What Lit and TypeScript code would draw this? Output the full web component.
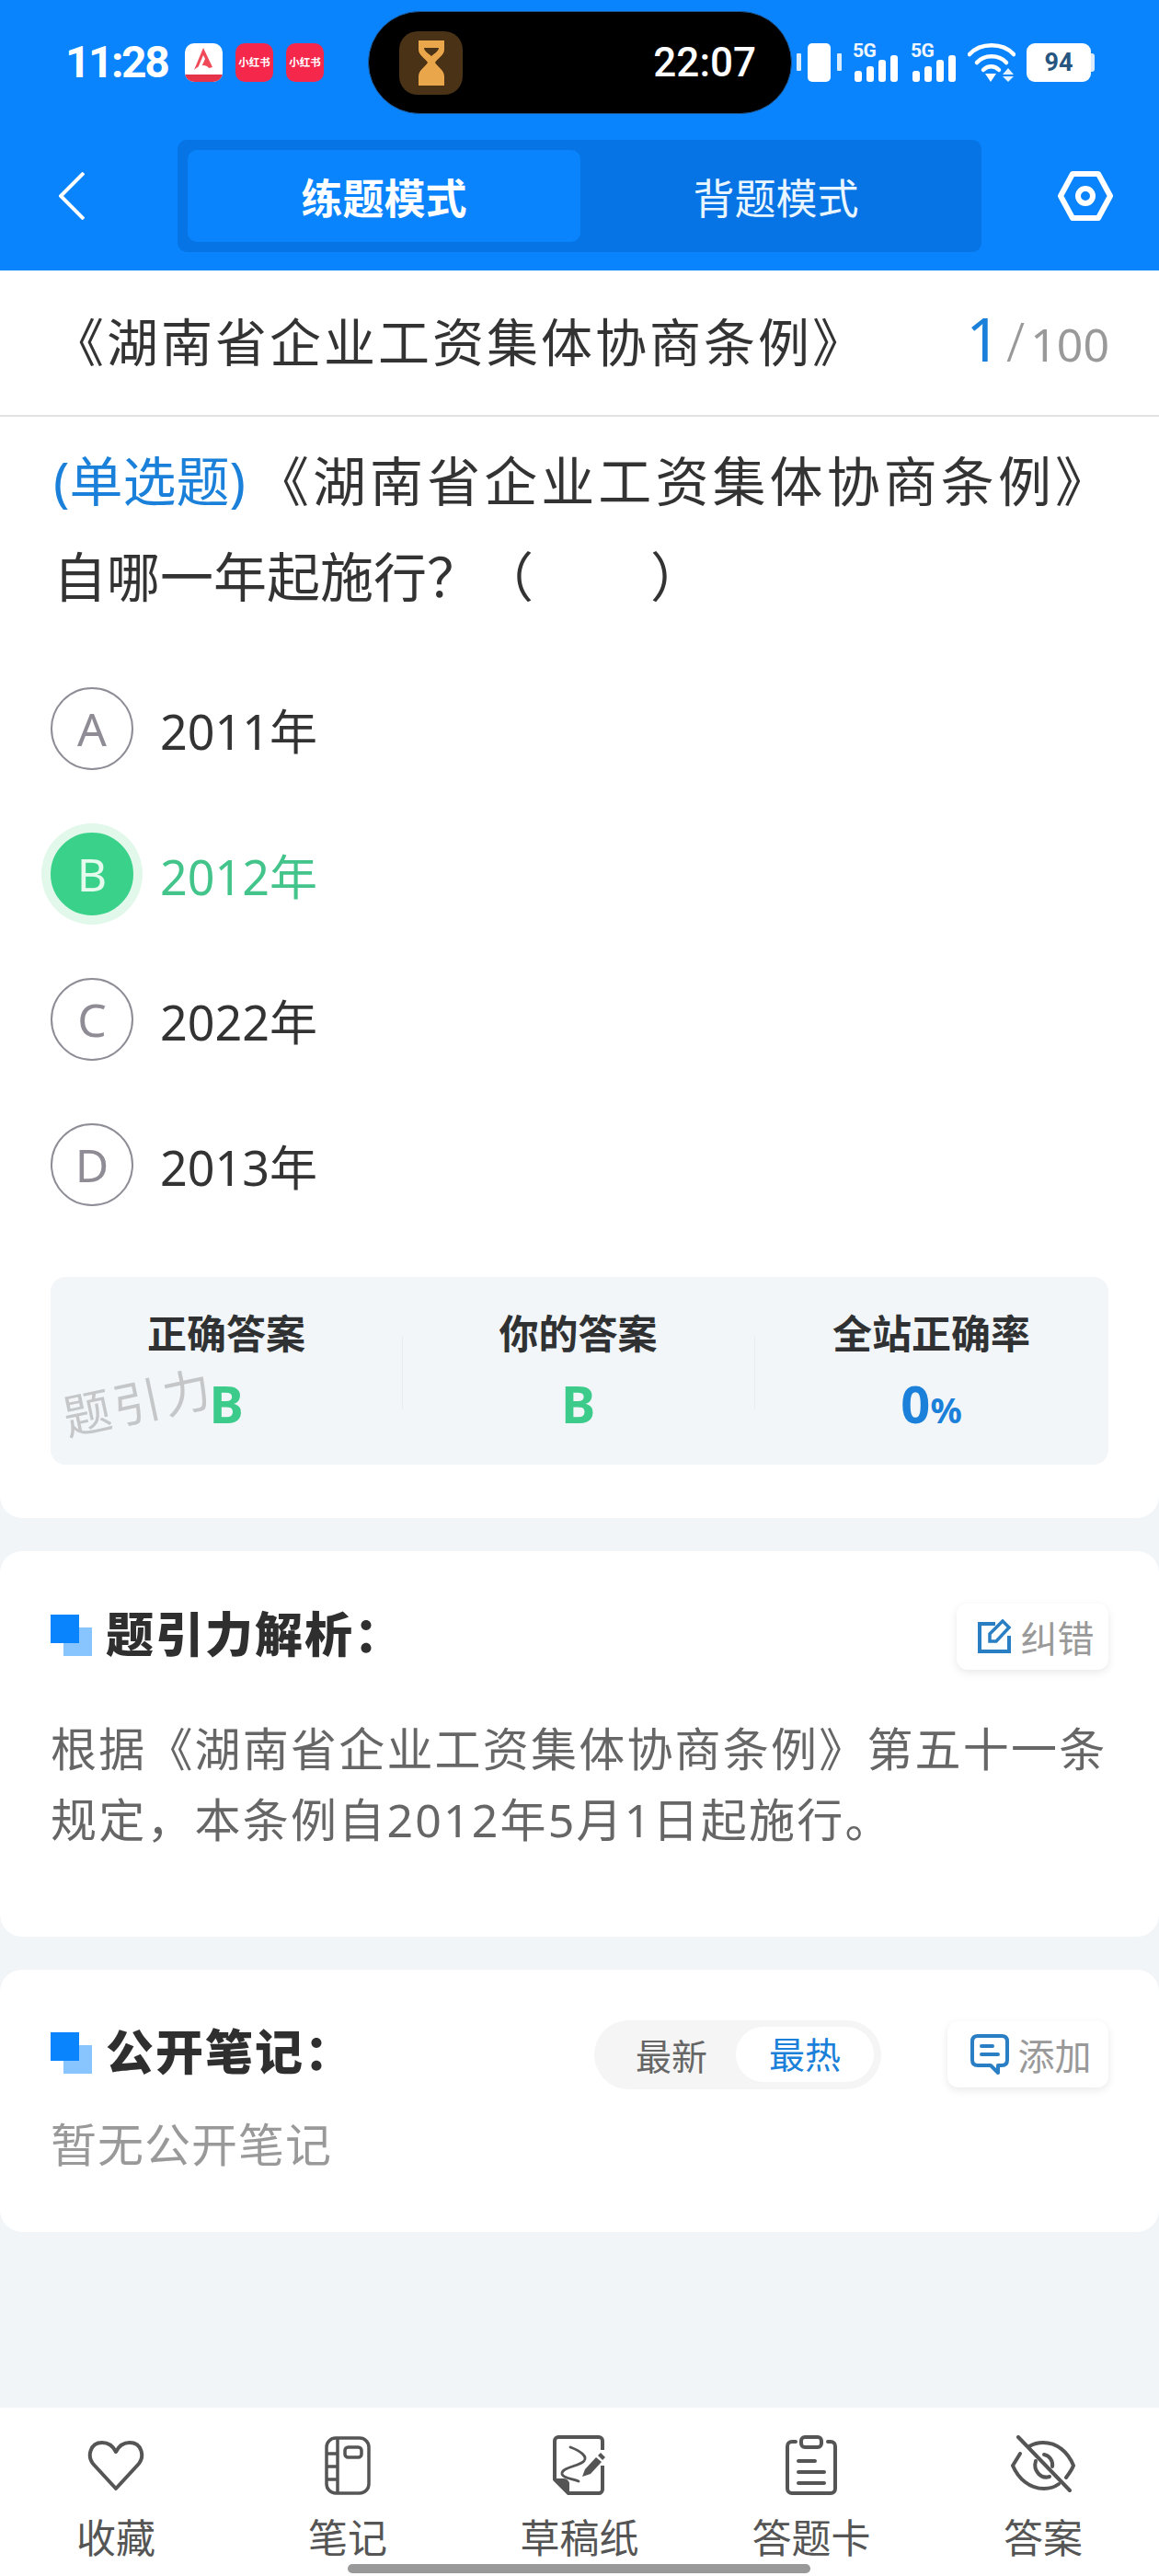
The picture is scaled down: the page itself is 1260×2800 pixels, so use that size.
import { LitElement, html, css, svg } from "lit";
import { customElement } from "lit/decorators.js";

const opts = [
  ["A", "2011年", false],
  ["B", "2012年", true],
  ["C", "2022年", false],
  ["D", "2013年", false],
] as const;

const bars = svg`<rect x="2" y="17" width="8" height="12" rx="3"/><rect x="15" y="12" width="8" height="17" rx="3"/><rect x="28" y="5" width="8" height="24" rx="3"/><rect x="41" y="0" width="8" height="29" rx="3"/>`;

@customElement("app-root")
export class AppRoot extends LitElement {
  static styles = css`
    :host { display: block; width: 1260px; height: 2800px; background: #f1f5f8; font-family: "Noto Sans", "Noto Sans CJK SC", sans-serif; color: #333; overflow: hidden; }
    .page { height: 2800px; display: flex; flex-direction: column; }
    svg { display: block; flex: none; }
    .head { height: 294px; background: #0a84fd; color: #fff; display: flex; flex-direction: column; flex: none; }
    .status { height: 136px; padding: 12px 0 0 71px; box-sizing: border-box; display: flex; align-items: flex-start; }
    .time { font: 700 48px/50px "Roboto", sans-serif; letter-spacing: -2.5px; width: 130px; margin-top: 31px; }
    .apps { display: flex; gap: 14px; margin-top: 35px; width: 199px; }
    .app { width: 41px; height: 42px; border-radius: 10px; background: #f5274b; display: flex; align-items: center; justify-content: center; overflow: hidden; color: #fff; font: 700 11.5px/1 "Noto Sans CJK SC", sans-serif; white-space: nowrap; }
    .app.a { background: #fff; }
    .pill { width: 461px; height: 112px; background: #000; border-radius: 56px; border: 1px solid #1d5b9c; box-sizing: border-box; display: flex; align-items: center; justify-content: space-between; padding: 0 38px 0 33px; }
    .glass { width: 69px; height: 69px; border-radius: 20px; background: #4a3217; display: flex; align-items: center; justify-content: center; }
    .clock { font: 500 44px/1 "Roboto", sans-serif; }
    .sys { display: flex; align-items: center; margin: 35px 0 0 5px; }
    .sig { position: relative; width: 50px; height: 42px; margin-left: 11px; }
    .sig + .sig { margin-left: 13px; }
    .sig b { position: absolute; left: 0; top: -3px; font: 700 21px/22px "Roboto", sans-serif; letter-spacing: -0.5px; color: #f1f7ff; }
    .sig svg { position: absolute; left: 0; bottom: 0; }
    .wifi { margin-left: 12px; }
    .batt { width: 70px; height: 42px; border-radius: 9px; background: #fff; color: #26557f; font: 700 27px/42px "Roboto", sans-serif; text-align: center; margin-left: 12px; }
    .nub { width: 4px; height: 20px; background: #dbeafd; border-radius: 0 3px 3px 0; }
    .nav { display: flex; align-items: center; height: 124px; padding: 0 0 0 64px; margin-top: 15px; }
    .tabs { width: 874px; height: 122px; margin-left: 101px; background: #0674e4; border-radius: 10px; padding: 11px; box-sizing: border-box; display: flex; }
    .tabs div { flex: 1; display: flex; align-items: center; justify-content: center; font-size: 45px; border-radius: 10px; }
    .tabs .on { background: #0a84fd; font-weight: 700; flex: 0 0 427px; }
    .tabs .off { color: #eaf6ff; }
    .hexi { margin-left: 83px; }
    .first { background: #fff; border-radius: 0 0 24px 24px; flex: none; height: 1356px; box-sizing: border-box; display: flex; flex-direction: column; }
    .titlebar { height: 159px; border-bottom: 2px solid #e2e2e2; box-sizing: border-box; flex: none; display: flex; align-items: center; justify-content: space-between; padding: 0 54px 4px 57px; }
    .ttl { font-size: 56px; line-height: 70px; letter-spacing: 3px; color: #333; }
    .count { color: #999; font-size: 50px; line-height: 70px; display: flex; align-items: baseline; }
    .count b { color: #1a80d9; font-weight: 400; font-size: 66px; margin-right: 6px; }
    .count i { font-style: normal; font-size: 58px; font-weight: 300; margin-right: 6px; }
    .q { padding: 0 55px 0 58px; font-size: 58px; line-height: 104px; margin: 18px 0 0; }
    .q .l1 { text-align: justify; text-align-last: justify; }
    .q span { display: inline-block; color: #1a80d9; margin-right: 7px; }
    .q em { display: inline-block; width: 127px; }
    .options { margin-top: 68px; padding-left: 55px; display: flex; flex-direction: column; gap: 68px; }
    .opt { display: flex; align-items: center; height: 90px; font-size: 52px; color: #333; }
    .circle { width: 90px; height: 90px; box-sizing: border-box; border: 2px solid #8f8c96; border-radius: 50%; color: #8f8c96; font-size: 50px; display: flex; align-items: center; justify-content: center; margin-right: 29px; }
    .opt.sel { color: #43c48a; }
    .opt.sel .circle { background: #3ad28a; border-color: #3ad28a; color: #e4fbee; box-shadow: 0 0 0 10px #e1f8ea; }
    .stats { position: relative; margin: 77px 55px 0; height: 204px; background: #f2f6f9; border-radius: 16px; display: grid; grid-template-columns: 382px 383px 385px; }
    .stat { display: flex; flex-direction: column; align-items: center; padding-top: 33px; }
    .stat + .stat { background: linear-gradient(#e9edf0, #e9edf0) 0 64px / 1px 80px no-repeat; }
    .stat h4 { margin: 0; font-size: 43px; line-height: 58px; font-weight: 700; color: #2f3133; }
    .stat div { font: 700 56px/64px "Noto Sans", sans-serif; margin-top: 14px; color: #3ccb8a; }
    .stat div.blue { color: #1a80d9; }
    .stat div small { font-size: 38px; }
    .mark { position: absolute; left: 14px; top: 121px; font: 400 52px/60px "Noto Sans CJK SC", sans-serif; color: #c4c6c8; letter-spacing: 3px; transform: rotate(-12deg); transform-origin: left center; }
    .card { background: #fff; border-radius: 24px; margin-top: 36px; padding: 0 55px; box-sizing: border-box; flex: none; }
    .c1 { height: 419px; padding-top: 56px; }
    .c2 { height: 285px; padding-top: 55px; }
    .row { display: flex; align-items: center; height: 74px; }
    .sq { width: 45px; height: 45px; flex: none; margin: 0 15px 3px 0; background: linear-gradient(#0a84fd, #0a84fd) 0 0 / 31px 31px no-repeat, linear-gradient(#88c4fd, #88c4fd) 14px 14px / 31px 31px no-repeat; }
    .row h3 { margin: 0 0 6px; font-size: 52px; line-height: 68px; font-weight: 900; color: #2f2f2f; letter-spacing: 2px; flex: 1; }
    .btn { height: 72px; border-radius: 12px; background: #fff; box-shadow: 0 3px 10px rgba(0,0,0,.09); display: flex; align-items: center; justify-content: center; gap: 10px; padding-left: 6px; box-sizing: border-box; font-size: 40px; color: #999; }
    .btn.fix { width: 165px; }
    .btn.add { width: 175px; }
    .body { margin: 47px 0 0; font-size: 50px; line-height: 77px; color: #666; letter-spacing: 2.2px; }
    .seg { width: 312px; height: 75px; border-radius: 38px; background: #f5f5f5; display: flex; align-items: center; padding: 0 8px 0 14px; box-sizing: border-box; margin-right: 72px; font-size: 39px; color: #666; }
    .seg span { flex: 1; text-align: center; }
    .seg .on { flex: 0 0 150px; height: 60px; line-height: 60px; border-radius: 30px; background: #fff; color: #1a80d9; }
    .none { margin: 25px 0 0; font-size: 50px; line-height: 72px; color: #999; letter-spacing: 1px; }
    .spacer { flex: 1; }
    .tabbar { flex: none; position: relative; height: 183px; background: #fff; display: grid; grid-template-columns: repeat(5, 252px); padding-top: 30px; box-sizing: border-box; }
    .ti { display: flex; flex-direction: column; align-items: center; color: #555; font-size: 43px; line-height: 50px; }
    .ti .ico { height: 65px; display: flex; align-items: center; justify-content: center; margin-bottom: 22px; }
    .homebar { position: absolute; left: 378px; bottom: 3px; width: 503px; height: 10px; border-radius: 5px; background: #999; }
  `;

  render() {
    return html`<div class="page">
      <div class="head">
        <div class="status">
          <div class="time">11:28</div>
          <div class="apps">
            <div class="app a"><svg width="41" height="42" viewBox="0 0 41 42"><path d="M20 5 L30 26 L26 27 C22 22 16 24 10 29 Z" fill="#f04a58"/><path d="M14 27 L20 13 L22 17 L17 28Z" fill="#fff"/><rect y="34" width="41" height="8" fill="#e5334a"/></svg></div>
            <div class="app">小红书</div>
            <div class="app">小红书</div>
          </div>
          <div class="pill">
            <div class="glass"><svg width="28" height="49" viewBox="0 0 28 49"><path d="M0 0H28V10C28 16 20 20 18 24C20 28 28 32 28 39V49H0V39C0 32 8 28 10 24C8 20 0 16 0 10Z" fill="#eaa64a"/><path d="M6 8H22C22 12 16 15 14 17C12 15 6 12 6 8Z" fill="#4a3217"/></svg></div>
            <div class="clock">22:07</div>
          </div>
          <div class="sys">
            <svg width="50" height="42" viewBox="0 0 50 42" fill="#fff"><rect x="12" y="0" width="25" height="42" rx="5"/><rect x="0" y="11" width="5" height="19" rx="1" opacity=".85"/><rect x="44" y="11" width="5" height="19" rx="1" opacity=".85"/></svg>
            <div class="sig"><b>5G</b><svg width="50" height="29" viewBox="0 0 50 29" fill="#fff">${bars}</svg></div>
            <div class="sig"><b>5G</b><svg width="50" height="29" viewBox="0 0 50 29" fill="#fff">${bars}</svg></div>
            <svg class="wifi" width="52" height="42" viewBox="0 0 52 42" fill="none" stroke="#fff" stroke-width="4.5" stroke-linecap="round"><path d="M2 12C14 -1 38 -1 50 12"/><path d="M10 21C18 12 34 12 42 21"/><path d="M17 29C22 24 29 24 34 29"/><path d="M19 33H31L25 42Z" fill="#fff" stroke="none"/><path d="M44 27L50 34H38ZM44 42L38 36H50Z" fill="#e4f1ff" stroke="none"/></svg>
            <div class="batt">94</div><div class="nub"></div>
          </div>
        </div>
        <div class="nav">
          <svg width="28" height="52" viewBox="0 0 28 52" fill="none" stroke="#fff" stroke-width="4"><path d="M27 1L2 26L27 51"/></svg>
          <div class="tabs"><div class="on">练题模式</div><div class="off">背题模式</div></div>
          <svg class="hexi" width="60" height="54" viewBox="0 0 60 54" fill="none" stroke="#fff" stroke-width="6" stroke-linejoin="round"><path d="M16 3H44L57 27L44 51H16L3 27Z"/><circle cx="30" cy="27" r="8"/></svg>
        </div>
      </div>

      <div class="first">
        <div class="titlebar"><div class="ttl">《湖南省企业工资集体协商条例》</div><div class="count"><b>1</b><i>/</i>100</div></div>
        <div class="q">
          <div class="l1"><span>(单选题)</span>《湖南省企业工资集体协商条例》</div>
          <div>自哪一年起施行？（<em></em>）</div>
        </div>
        <div class="options">
          ${opts.map(([k, t, s]) => html`<div class="opt ${s ? "sel" : ""}"><div class="circle">${k}</div>${t}</div>`)}
        </div>
        <div class="stats">
          <div class="stat"><h4>正确答案</h4><div>B</div></div>
          <div class="stat"><h4>你的答案</h4><div>B</div></div>
          <div class="stat"><h4>全站正确率</h4><div class="blue">0<small>%</small></div></div>
          <div class="mark">题引力</div>
        </div>
      </div>

      <div class="card c1">
        <div class="row"><div class="sq"></div><h3>题引力解析：</h3>
          <div class="btn fix"><svg width="38" height="38" viewBox="0 0 38 38" fill="none" stroke="#2a7fc4" stroke-width="4"><path d="M20 5H3V35H35V18"/><path d="M14 24V16L28 2L35 9L21 24Z" stroke-width="3.5"/></svg>纠错</div>
        </div>
        <p class="body">根据《湖南省企业工资集体协商条例》第五十一条规定，本条例自2012年5月1日起施行。</p>
      </div>

      <div class="card c2">
        <div class="row"><div class="sq"></div><h3>公开笔记：</h3>
          <div class="seg"><span>最新</span><span class="on">最热</span></div>
          <div class="btn add"><svg width="42" height="44" viewBox="0 0 42 44" fill="none" stroke="#2a7fc4" stroke-width="4"><path d="M8 2H34C38 2 40 4 40 8V28C40 32 38 34 34 34H30L30 42L22 34H8C4 34 2 32 2 28V8C2 4 4 2 8 2Z" stroke-linejoin="round"/><path d="M12 13H24M12 22H30" stroke-linecap="round"/></svg>添加</div>
        </div>
        <p class="none">暂无公开笔记</p>
      </div>

      <div class="spacer"></div>

      <div class="tabbar">
        <div class="ti"><div class="ico"><svg width="62" height="56" viewBox="0 0 62 56" fill="none" stroke="#555" stroke-width="4" stroke-linejoin="round"><path d="M31 53L7 27C-1 18 3 3 16 3C23 3 28 7 31 13C34 7 39 3 46 3C59 3 63 18 55 27Z"/></svg></div>收藏</div>
        <div class="ti"><div class="ico"><svg width="50" height="64" viewBox="0 0 50 64" fill="none" stroke="#555" stroke-width="3.5"><rect x="2" y="2" width="46" height="60" rx="10"/><path d="M14 2V62M2 19H14M2 33H14M2 47H14"/><rect x="22" y="12" width="18" height="11" rx="3.5"/></svg></div>笔记</div>
        <div class="ti"><div class="ico"><svg width="58" height="65" viewBox="0 0 58 65" fill="none" stroke="#555" stroke-width="4" stroke-linejoin="round"><path d="M54 16V6C54 4 52 2 50 2H6C4 2 2 4 2 6V48L17 63H50C52 63 54 61 54 59V33"/><path d="M2 48H12C14 48 17 50 17 53V63Z" fill="#555" stroke-width="2"/><path d="M19 13C30 17 38 23 34 28C28 34 9 35 10 42C11 47 22 47 28 50" stroke-width="2.8" stroke-linecap="round"/><path d="M32 45L35 37L47 24L53 29L41 42Z" fill="#555" stroke="none"/><path d="M49 22L52 19L57 24L54 27Z" fill="#555" stroke="none"/></svg></div>草稿纸</div>
        <div class="ti"><div class="ico"><svg width="56" height="65" viewBox="0 0 56 65" fill="none" stroke="#555" stroke-width="4" stroke-linecap="round"><path d="M11 7H7C4 7 2 9 2 12V58C2 61 4 63 7 63H49C52 63 54 61 54 58V12C54 9 52 7 49 7H46"/><rect x="17" y="2" width="22" height="11" rx="4"/><path d="M14 28H32M14 40H42M14 52H42"/></svg></div>答题卡</div>
        <div class="ti"><div class="ico"><svg width="70" height="65" viewBox="0 0 70 65" fill="none" stroke="#555" stroke-width="4" stroke-linecap="round"><path d="M10 20L2 33C8 47 20 58 36 58C42 58 48 56 52 53"/><path d="M20 12C25 9 30 8 35 8C50 8 62 18 68 33C66 38 63 42 60 46"/><path d="M27 28C24 38 32 48 42 45"/><path d="M36 21C42 22 46 28 45 34"/><path d="M8 2L64 60"/></svg></div>答案</div>
        <div class="homebar"></div>
      </div>
    </div>`;
  }
}
